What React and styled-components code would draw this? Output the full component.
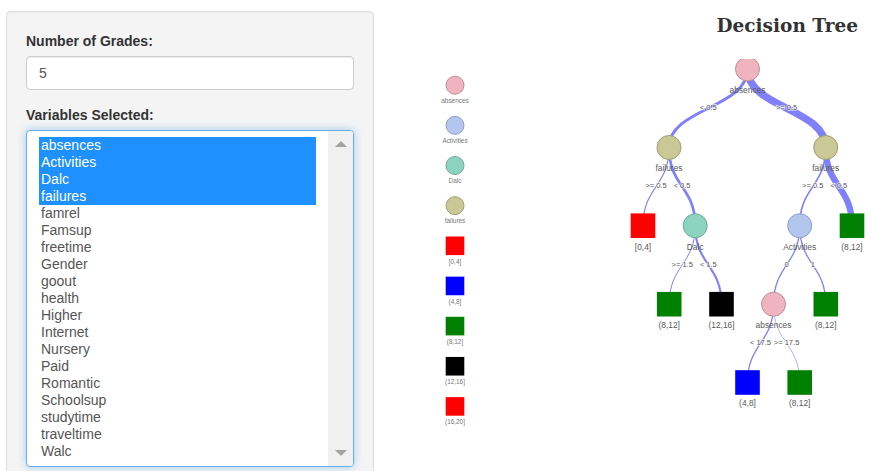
import React from 'react';
import styled, { createGlobalStyle } from 'styled-components';

const GlobalStyle = createGlobalStyle`
  *, *::before, *::after { box-sizing: border-box; }
  html, body { margin: 0; background: #fff; overflow: hidden; }
  body { font: 14px/20px "Liberation Sans", Arial, sans-serif; color: #333; }
`;

const Page = styled.main`
  display: grid;
  grid-template-columns: 368px 1fr;
  height: 471px;
  padding: 11px 0 0 6px;
  overflow: hidden;
`;

const Sidebar = styled.form`
  height: 500px;
  padding: 19px;
  background: #f4f4f4;
  border: 1px solid #e0e0e0;
  border-radius: 4px;
  box-shadow: inset 0 1px 1px rgba(0, 0, 0, 0.05);
`;

const Field = styled.div`
  margin-bottom: 15px;
`;

const Label = styled.label`
  display: block;
  height: 20px;
  margin-bottom: 5px;
  font-weight: 700;
`;

const TextInput = styled.input`
  display: block;
  width: 328px;
  height: 34px;
  padding: 6px 12px;
  font: inherit;
  color: #555;
  background: #fff;
  border: 1px solid #ccc;
  border-radius: 4px;
  outline: none;
  box-shadow: inset 0 1px 1px rgba(0, 0, 0, 0.075);
`;

const ListBox = styled.div`
  display: flex;
  width: 328px;
  height: 337px;
  background: #fff;
  border: 1px solid #66afe9;
  border-radius: 4px;
  overflow: hidden;
  box-shadow: 0 0 8px rgba(102, 175, 233, 0.6);
`;

const Options = styled.ul`
  flex: 1;
  margin: 0;
  padding: 6px 12px;
  list-style: none;
`;

const Option = styled.li`
  height: 17px;
  padding-left: 2px;
  line-height: 17px;
  color: ${(p) => (p.$selected ? '#fff' : '#555')};
  background: ${(p) => (p.$selected ? '#1e90ff' : 'transparent')};
`;

const Scrollbar = styled.div`
  display: flex;
  flex-direction: column;
  justify-content: space-between;
  align-items: center;
  width: 25px;
  padding: 10px 0;
  background: #f0f0f0;
`;

const Arrow = styled.span`
  width: 0;
  height: 0;
  border: solid transparent;
  border-width: ${(p) => (p.$up ? '0 6px 6px' : '6px 6px 0')};
  border-color: ${(p) => (p.$up ? 'transparent transparent #a3a3a3' : '#a3a3a3 transparent transparent')};
`;

const Plot = styled.section`
  display: flex;
  flex-direction: column;
`;

const Title = styled.h1`
  height: 48px;
  margin: 0;
  padding: 1px 16px 0 0;
  font: 700 18.5px/28px "DejaVu Serif", Georgia, serif;
  text-align: right;
  white-space: nowrap;
`;

const Chart = styled.svg`
  display: block;
  width: 500px;
  height: 412px;
  font-family: "Liberation Sans", Arial, sans-serif;
`;

const NodeLabel = styled.text`
  font-size: ${(p) => (p.$small ? '6.4px' : '8.4px')};
  fill: ${(p) => (p.$small ? '#777' : '#5a5a5a')};
  text-anchor: middle;
`;

const EdgeLabel = styled.text`
  font-size: 7.5px;
  fill: #555;
  stroke: #fff;
  stroke-width: 1.4px;
  stroke-opacity: 0.8;
  paint-order: stroke;
  text-anchor: middle;
`;

const variables = [
  'absences', 'Activities', 'Dalc', 'failures', 'famrel', 'Famsup', 'freetime',
  'Gender', 'goout', 'health', 'Higher', 'Internet', 'Nursery', 'Paid',
  'Romantic', 'Schoolsup', 'studytime', 'traveltime', 'Walc',
];
const selected = variables.slice(0, 4);

const circles = {
  absences: ['#f0b4c0', '#bd8f98'],
  Activities: ['#b3c6ed', '#8c9fc9'],
  Dalc: ['#8cd4c0', '#6eaa9a'],
  failures: ['#cac896', '#a19e70'],
};
const squares = {
  '[0,4]': 'red',
  '(4,8]': 'blue',
  '(8,12]': 'green',
  '(12,16]': 'black',
  '(16,20]': 'red',
};

const legend = [...Object.keys(circles), ...Object.keys(squares)];

const nodes = {
  root: [747.5, 69, 'absences'],
  left: [669, 147.5, 'failures'],
  right: [825.7, 147.5, 'failures'],
  leftLow: [643, 225.7, '[0,4]'],
  dalc: [695.2, 225.7, 'Dalc'],
  activities: [799.7, 225.7, 'Activities'],
  rightMid: [852, 225.7, '(8,12]'],
  dalcMid: [669.2, 304.2, '(8,12]'],
  dalcHigh: [721.5, 304.2, '(12,16]'],
  absences: [773.5, 304.2, 'absences'],
  actMid: [825.8, 304.2, '(8,12]'],
  absLow: [747.5, 382.5, '(4,8]'],
  absMid: [799.7, 382.5, '(8,12]'],
};

const edges = [
  ['root', 'left', 3, '< 0.5'],
  ['root', 'right', 7.5, '>= 0.5'],
  ['left', 'leftLow', 1.1, '>= 0.5'],
  ['left', 'dalc', 2.7, '< 0.5'],
  ['right', 'activities', 1.7, '>= 0.5'],
  ['right', 'rightMid', 6.3, '< 0.5'],
  ['dalc', 'dalcMid', 1, '>= 1.5'],
  ['dalc', 'dalcHigh', 2.1, '< 1.5'],
  ['activities', 'absences', 1.3, '0'],
  ['activities', 'actMid', 1.3, '1'],
  ['absences', 'absLow', 1.3, '< 17.5'],
  ['absences', 'absMid', 0.6, '>= 17.5'],
];

function Node({ x, y, name, small }) {
  const r = small ? 9 : 12;
  const circle = circles[name];
  return (
    <g>
      {circle ? (
        <circle cx={x} cy={y} r={r} fill={circle[0]} stroke={circle[1]} />
      ) : (
        <rect x={x - r - 0.3} y={y - r - 0.3} width={2 * r + 0.6} height={2 * r + 0.6} fill={squares[name]} />
      )}
      <NodeLabel $small={small} x={x} y={y + (small ? 17.8 : 23.9)}>{name}</NodeLabel>
    </g>
  );
}

function Edge({ from, to, width }) {
  const [x1, y1] = nodes[from];
  const [x2, y2] = nodes[to];
  const mid = (y1 + y2) / 2;
  return (
    <path
      d={`M${x1} ${y1}C${x1} ${mid} ${x2} ${mid} ${x2} ${y2}`}
      fill="none"
      stroke="#8080fa"
      strokeWidth={width}
    />
  );
}

export default function App() {
  return (
    <>
      <GlobalStyle />
      <Page>
        <Sidebar>
          <Field>
            <Label htmlFor="grades">Number of Grades:</Label>
            <TextInput id="grades" defaultValue="5" />
          </Field>
          <Field>
            <Label>Variables Selected:</Label>
            <ListBox role="listbox">
              <Options>
                {variables.map((v) => (
                  <Option key={v} $selected={selected.includes(v)}>{v}</Option>
                ))}
              </Options>
              <Scrollbar>
                <Arrow $up />
                <Arrow />
              </Scrollbar>
            </ListBox>
          </Field>
        </Sidebar>
        <Plot>
          <Title>Decision Tree</Title>
          <Chart viewBox="374 59 500 412">
            {legend.map((name, i) => (
              <Node key={name} x={455} y={85.2 + i * 40.15} name={name} small />
            ))}
            {edges.map(([from, to, width]) => (
              <Edge key={from + to} from={from} to={to} width={width} />
            ))}
            {Object.entries(nodes).map(([id, [x, y, name]]) => (
              <Node key={id} x={x} y={y} name={name} />
            ))}
            {edges.map(([from, to, , label]) => (
              <EdgeLabel
                key={from + to}
                x={(nodes[from][0] + nodes[to][0]) / 2}
                y={(nodes[from][1] + nodes[to][1]) / 2 + 1.7}
              >
                {label}
              </EdgeLabel>
            ))}
          </Chart>
        </Plot>
      </Page>
    </>
  );
}
